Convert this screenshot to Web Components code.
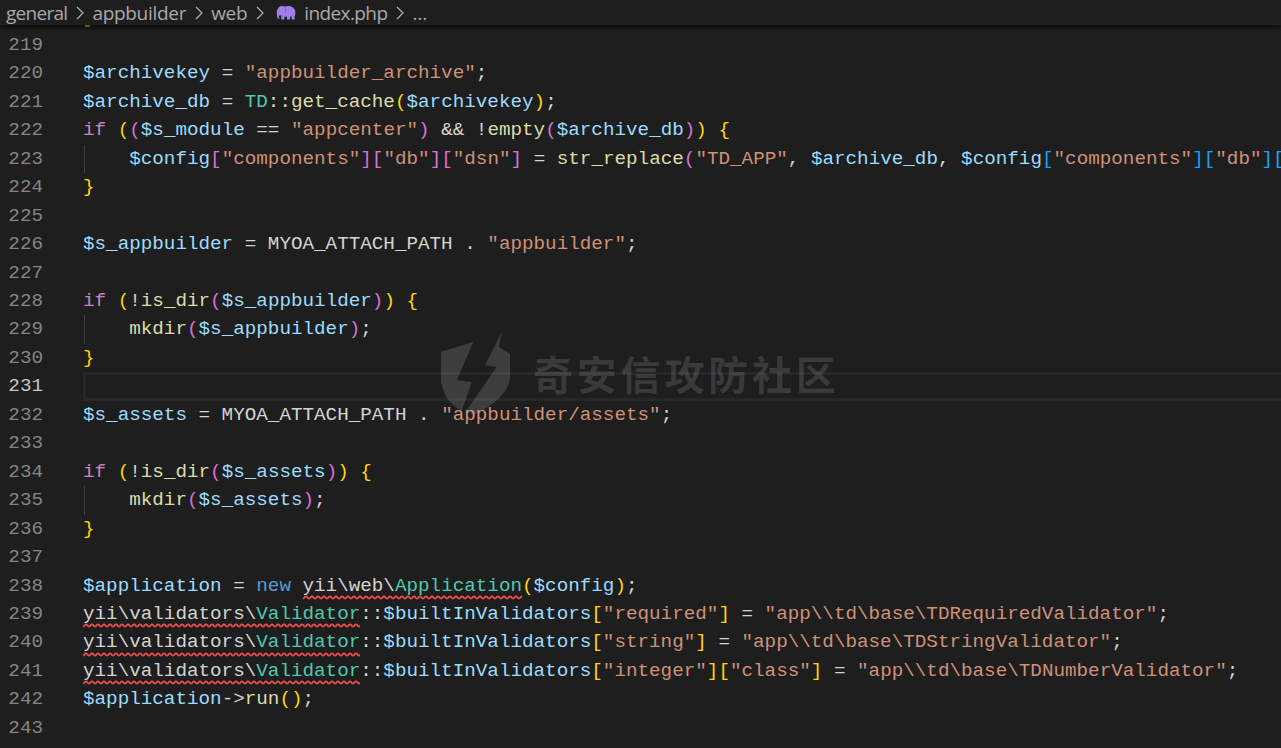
<!DOCTYPE html>
<html><head><meta charset="utf-8"><style>html,body{margin:0;height:100%;background:#1e1e1e;overflow:hidden}</style></head><body>
<vs-editor></vs-editor>
<script>
const L=[
[219,''],
[220,'<i>$archivekey</i> = <s>"appbuilder_archive"</s>;'],
[221,'<i>$archive_db</i> = <u>TD</u>::<em>get_cache</em><b class=y>(</b><i>$archivekey</i><b class=y>)</b>;'],
[222,'<q>if</q> <b class=y>(</b><b class=p>(</b><i>$s_module</i> == <s>"appcenter"</s><b class=p>)</b> &amp;&amp; !<em>empty</em><b class=p>(</b><i>$archive_db</i><b class=p>)</b><b class=y>)</b> <b class=y>{</b>'],
[223,'    <i>$config</i><b class=p>[</b><s>"components"</s><b class=p>]</b><b class=p>[</b><s>"db"</s><b class=p>]</b><b class=p>[</b><s>"dsn"</s><b class=p>]</b> = <em>str_replace</em><b class=p>(</b><s>"TD_APP"</s>, <i>$archive_db</i>, <i>$config</i><b class=l>[</b><s>"components"</s><b class=l>]</b><b class=l>[</b><s>"db"</s><b class=l>]</b><b class=l>[</b>',1],
[224,'<b class=y>}</b>'],[225,''],
[226,'<i>$s_appbuilder</i> = MYOA_ATTACH_PATH . <s>"appbuilder"</s>;'],[227,''],
[228,'<q>if</q> <b class=y>(</b>!<em>is_dir</em><b class=p>(</b><i>$s_appbuilder</i><b class=p>)</b><b class=y>)</b> <b class=y>{</b>'],
[229,'    <em>mkdir</em><b class=p>(</b><i>$s_appbuilder</i><b class=p>)</b>;',1],
[230,'<b class=y>}</b>'],[231,''],
[232,'<i>$s_assets</i> = MYOA_ATTACH_PATH . <s>"appbuilder/assets"</s>;'],[233,''],
[234,'<q>if</q> <b class=y>(</b>!<em>is_dir</em><b class=p>(</b><i>$s_assets</i><b class=p>)</b><b class=y>)</b> <b class=y>{</b>'],
[235,'    <em>mkdir</em><b class=p>(</b><i>$s_assets</i><b class=p>)</b>;',1],
[236,'<b class=y>}</b>'],[237,''],
[238,'<i>$application</i> = <kbd>new</kbd> <a>yii\\web\\<u>Application</u></a><b class=y>(</b><i>$config</i><b class=y>)</b>;'],
[239,'<a>yii\\validators\\<u>Validator</u></a>::<i>$builtInValidators</i><b class=y>[</b><s>"required"</s><b class=y>]</b> = <s>"app\\\\td\\base\\TDRequiredValidator"</s>;'],
[240,'<a>yii\\validators\\<u>Validator</u></a>::<i>$builtInValidators</i><b class=y>[</b><s>"string"</s><b class=y>]</b> = <s>"app\\\\td\\base\\TDStringValidator"</s>;'],
[241,'<a>yii\\validators\\<u>Validator</u></a>::<i>$builtInValidators</i><b class=y>[</b><s>"integer"</s><b class=y>]</b><b class=y>[</b><s>"class"</s><b class=y>]</b> = <s>"app\\\\td\\base\\TDNumberValidator"</s>;'],
[242,'<i>$application</i>-&gt;<em>run</em><b class=y>(</b><b class=y>)</b>;'],
[243,'']];
const squig="url(\"data:image/svg+xml,%3Csvg xmlns='http://www.w3.org/2000/svg' width='6' height='5'%3E%3Cpath d='M0 3.6C1.500 3.6 1.500 1.400 3 1.400S4.500 3.600 6 3.600' fill='none' stroke='%23f14c4c' stroke-width='1.700'/%3E%3C/svg%3E\")";
class VsCrumbs extends HTMLElement{constructor(){super();const c='<svg class="c" viewBox="0 0 12 16"><path d="M3 2l6 6-6 6"/></svg>';this.attachShadow({mode:'open'}).innerHTML=`<style>
:host{display:flex;align-items:center;height:25px;background:#1e1e1e;box-shadow:0 2px 5px #000a;position:relative;z-index:2;font:19px "Open Sans","Noto Sans",sans-serif;color:#a9a9a9;padding-left:6px;white-space:nowrap}
span{display:inline-block}
svg.c{width:12px;height:16px;margin:1px 6.500px 0 6.500px;fill:none;stroke:#b0b0b0;stroke-width:1.2;flex:none}
svg.e{width:20px;height:15px;margin:0 8px 0 4px;flex:none}
</style><span style="letter-spacing:-.72px">general</span>${c}<span style="letter-spacing:-.3px">appbuilder</span>${c}<span style="letter-spacing:-.3px">web</span>${c}
<svg class="e" viewBox="0 0 20 15"><path fill="#a07ee6" d="M.8 9C.6 5 2.200 1.400 5.500 1c1.300-.2 2.500.2 3.300.6C10 1 11.500.8 13 1c3.800.4 6.400 3 6.400 6.600 0 1.600-.3 3.200-.8 4.400v2.400h-3v-3l-1.600.3v2.700h-3v-2.600H8.300v2.600H5.300v-3.800L3.800 10.300c-.7.400-.9 1.200-.9 2.100.2.500.5.900 1 1-.9.500-2.500.3-2.700-1.400z"/><path fill="#6d4fb5" d="M8.600 2.200c1.300 1.800 1.200 4.500-.3 6.500 2-.9 2.900-4.600.3-6.500z"/></svg><span style="letter-spacing:-.6px">index.php</span>${c}<span>…</span>`}}
class VsLine extends HTMLElement{constructor(){super();this.attachShadow({mode:'open'}).innerHTML=`<style>
:host{display:grid;grid-template-columns:83px 1fr;height:28.46px;box-sizing:border-box;white-space:pre;font:19.25px/28.46px "Liberation Mono",monospace;color:#d4d4d4;position:relative}
:host([active]) .t{box-shadow:inset 3px 3px 0 #272727,inset 0 -3px 0 #272727}
:host([active]) .n{color:#c6c6c6}
:host([guide]) .t::before{content:"";position:absolute;left:84px;top:0;bottom:0;width:1px;background:#404040}
.n{color:#858585;text-align:right;padding-right:40px}
.t{display:block;min-width:0}
i,b,s,u,q,em,kbd,a{font:inherit;font-style:normal;text-decoration:none}
q{quotes:none;color:#c586c0}kbd{color:#569cd6}
i{color:#9cdcfe}s{color:#ce9178}u{color:#4ec9b0}em{color:#dcdcaa}
.y{color:#ffd700}.p{color:#da70d6}.l{color:#179fff}
a{background:${squig} repeat-x 0 100%;display:inline-block;height:28.46px;vertical-align:top}
</style><span class="n"></span><span class="t"></span>`}
set data(d){const r=this.shadowRoot;r.querySelector('.n').textContent=d[0];r.querySelector('.t').innerHTML=d[1];if(d[2])this.setAttribute('guide','');if(d[0]==231)this.setAttribute('active','')}}
class VsMark extends HTMLElement{constructor(){super();this.attachShadow({mode:'open'}).innerHTML=`<style>
:host{position:absolute;left:441px;top:329px;display:flex;align-items:center;gap:23px;pointer-events:none;z-index:1;height:88px}
span{font:700 40px "Noto Sans CJK SC",sans-serif;letter-spacing:3.800px;color:rgba(255,255,255,.12);white-space:nowrap;margin-top:-1px}
svg{width:69px;height:84px;flex:none}
</style><svg viewBox="0 0 69 84"><path fill="rgba(255,255,255,.14)" d="M-1 21L32.300 11 15.700 49.300 30.700 51 20.700 80C12 75 5 68 2.300 59 .5 54-1 48-1 42zM60.700 1L44 34.300 55.700 36 25.700 79.300 32.300 84C50 76 69 62 69 45V22.700L58 16z"/></svg><span>奇安信攻防社区</span>`}}
class VsEditor extends HTMLElement{constructor(){super();this.attachShadow({mode:'open'}).innerHTML=`<style>
:host{display:flex;flex-direction:column;width:1281px;height:748px;background:#1e1e1e;position:relative;overflow:hidden}
.v{flex:1;overflow:hidden;min-height:0}
.frag{width:5px;height:2px;background:#b89a10;margin-left:85px;margin-bottom:3.960px}
</style><vs-crumbs></vs-crumbs><div class="v"><div class="frag"></div><div class="l"></div></div><vs-mark></vs-mark>`;
const h=this.shadowRoot.querySelector('.l');L.forEach(d=>{const e=document.createElement('vs-line');h.append(e);e.data=d})}}
customElements.define('vs-crumbs',VsCrumbs);customElements.define('vs-line',VsLine);customElements.define('vs-mark',VsMark);customElements.define('vs-editor',VsEditor);
</script></body></html>
